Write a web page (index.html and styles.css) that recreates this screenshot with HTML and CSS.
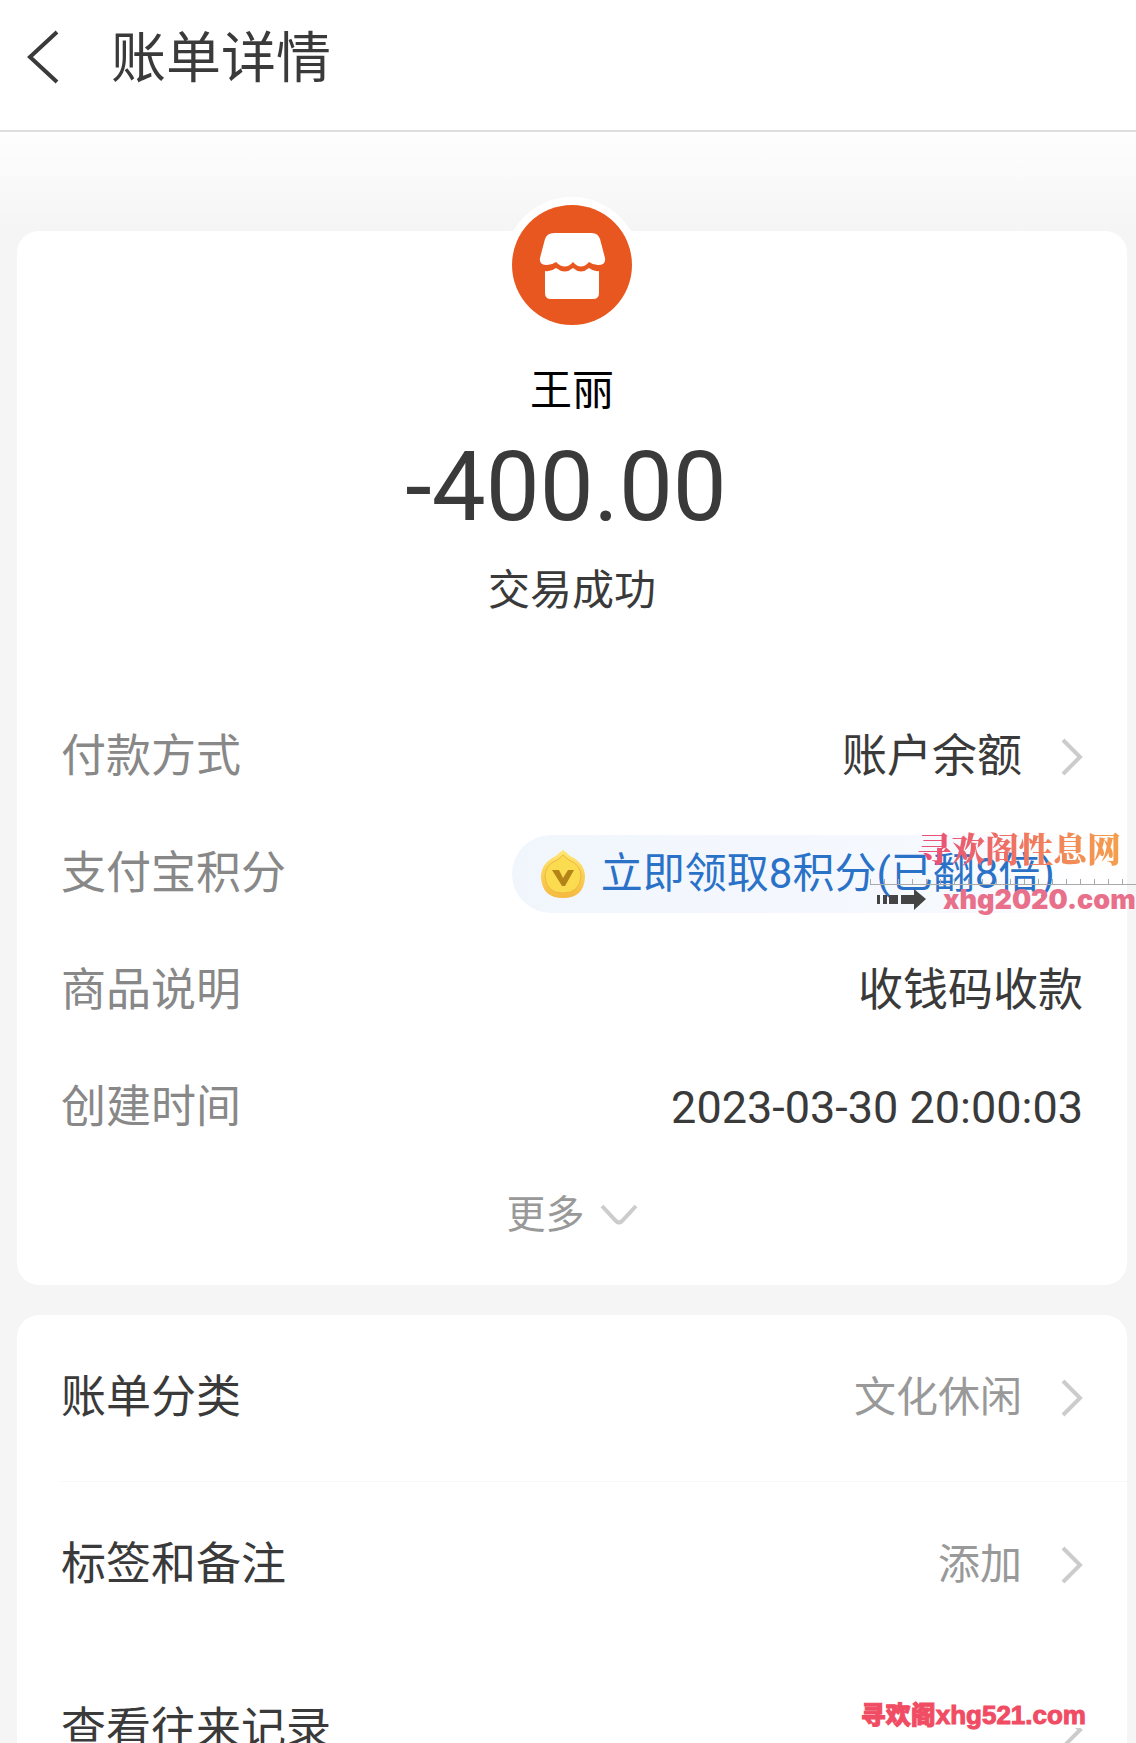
FILE: index.html
```
<!DOCTYPE html>
<html lang="zh-CN">
<head>
  <meta charset="UTF-8">
  <meta name="viewport" content="width=device-width, initial-scale=1">
  <title>账单详情</title>
  <link rel="stylesheet" href="styles.css">
</head>
<body>

  <header class="topbar">
    <button class="back" type="button" aria-label="返回">
      <svg width="34" height="54" viewBox="0 0 34 54"><path d="M31 2 L4 27 L31 52" fill="none" stroke="#3a3a3a" stroke-width="4"/></svg>
    </button>
    <h1>账单详情</h1>
  </header>

  <main>
    <section class="card bill">
      <div class="avatar">
        <svg viewBox="0 0 120 120">
          <circle cx="60" cy="60" r="60" fill="#e8571f"/>
          <path d="M42 28 H80 Q86 28 88 34 L93 53 Q94 60 86 60 Q81 60 77 57 Q69 66 61 57 Q53 66 44 57 Q40 60 35 60 Q27 60 28 53 L33 34 Q35 28 42 28 Z" fill="#fff"/>
          <path d="M33 66 Q39 67 44 63 Q53 70 61 63 Q69 70 77 63 Q82 67 87 66 V88 Q87 94 81 94 H39 Q33 94 33 88 Z" fill="#fff"/>
        </svg>
      </div>
      <p class="payee">王丽</p>
      <p class="amount">-400.00</p>
      <p class="status">交易成功</p>

      <dl class="details">
        <div class="row">
          <dt>付款方式</dt>
          <dd>
            <a href="#">账户余额
              <svg class="chevron" viewBox="0 0 22 38"><path d="M2 2 L19 19 L2 36"/></svg>
            </a>
          </dd>
        </div>
        <div class="row points">
          <dt>支付宝积分</dt>
          <dd>
            <button class="pill" type="button">
              <svg class="coin" viewBox="0 0 46 50">
                <defs>
                  <linearGradient id="gold" x1="0" y1="0" x2="0" y2="1">
                    <stop offset="0" stop-color="#ffe873"/>
                    <stop offset="1" stop-color="#f6b93f"/>
                  </linearGradient>
                </defs>
                <path d="M23 1 Q26 3 30 7 Q45 14 45 28 Q44 49 23 49 Q2 49 1 28 Q1 14 16 7 Q20 3 23 1 Z" fill="url(#gold)"/>
                <path d="M23 6 Q26 9 29 11 Q41 16 41 27 Q40 44 23 44 Q6 44 5 27 Q5 16 17 11 Q20 9 23 6 Z" fill="#fbdc50" stroke="#eeb83a"/>
                <path d="M12 21 H19 L23 29 L28 21 H34 L25 37 H22 Z" fill="#b48419"/>
              </svg>
              立即领取8积分(已翻8倍)
            </button>
          </dd>
          <div class="stamp">
            <span class="stamp-name">寻欢阁性息网</span>
            <span class="stamp-ruler"></span>
            <span class="stamp-site">
              <svg width="50" height="22" viewBox="0 0 50 22"><path d="M0 6 H3 V15 H0 Z M6 6 H10 V15 H6 Z M12 6 H21 V15 H12 Z M24 6 H37 V0 L49 10 L37 21 V15 H24 Z" fill="#444"/></svg>
              xhg2020.com
            </span>
          </div>
        </div>
        <div class="row">
          <dt>商品说明</dt>
          <dd>收钱码收款</dd>
        </div>
        <div class="row">
          <dt>创建时间</dt>
          <dd>2023-03-30 20:00:03</dd>
        </div>
      </dl>

      <button class="more" type="button">更多
        <svg width="38" height="22" viewBox="0 0 38 22"><path d="M2 2 L16 17 Q19 20 22 17 L36 2"/></svg>
      </button>
    </section>

    <section class="card links">
      <a class="link" href="#">
        <span>账单分类</span>
        <span class="value">文化休闲</span>
        <svg class="chevron" viewBox="0 0 22 38"><path d="M2 2 L19 19 L2 36"/></svg>
      </a>
      <a class="link" href="#">
        <span>标签和备注</span>
        <span class="value">添加</span>
        <svg class="chevron" viewBox="0 0 22 38"><path d="M2 2 L19 19 L2 36"/></svg>
      </a>
      <a class="link" href="#">
        <span>查看往来记录</span>
        <span class="value"></span>
        <svg class="chevron" viewBox="0 0 22 38"><path d="M2 2 L19 19 L2 36"/></svg>
      </a>
    </section>
  </main>

  <div class="footer-mark"><b>寻欢阁</b>xhg521.com</div>

</body>
</html>
```
FILE: styles.css
```
* {
  box-sizing: border-box;
}

body {
  position: relative;
  height: 100vh;
  margin: 0;
  overflow: hidden;
  background: #f5f5f5;
  color: #3a3a3a;
  font-family: Roboto, "Noto Sans CJK SC", sans-serif;
  font-size: 45px;
  line-height: 60px;
}

h1, p, dl, dd {
  margin: 0;
}

a {
  color: inherit;
  text-decoration: none;
}

button {
  padding: 0;
  border: none;
  background: none;
  color: inherit;
  font: inherit;
  cursor: pointer;
}

svg {
  display: block;
  flex: none;
}

.topbar {
  display: flex;
  align-items: center;
  gap: 51px;
  height: 132px;
  padding: 0 26px 16px;
  background: #fff;
  border-bottom: 2px solid #dedede;
}

.topbar h1 {
  padding-top: 2px;
  font-size: 55px;
  font-weight: 400;
}

main {
  display: flex;
  flex-direction: column;
  gap: 30px;
  padding: 99px 9px 0 17px;
  background: linear-gradient(#fefefe, #f5f5f5 98px);
}

.card {
  background: #fff;
  border-radius: 22px;
}

.bill {
  display: flex;
  flex-direction: column;
  align-items: center;
  padding-bottom: 40px;
}

.avatar {
  width: 136px;
  margin-top: -34px;
  padding: 8px;
  border-radius: 50%;
  background: #fff;
}

.payee {
  margin-top: 28px;
  color: #000;
  font-size: 42px;
}

.amount {
  margin-top: 6px;
  padding-right: 12px;
  font-size: 96px;
  line-height: 120px;
}

.status {
  margin-top: 14px;
  font-size: 42px;
}

.details {
  width: 100%;
  margin-top: 77px;
  padding: 0 44px;
}

.row {
  position: relative;
  display: flex;
  align-items: center;
  justify-content: space-between;
  height: 117px;
}

.row dt {
  color: #888;
}

.row a {
  display: flex;
  align-items: center;
  gap: 39px;
}

.chevron {
  width: 22px;
  height: 38px;
}

.chevron path,
.more path {
  fill: none;
  stroke: #ccc;
  stroke-width: 4;
}

.pill {
  display: flex;
  align-items: center;
  gap: 15px;
  height: 78px;
  padding: 0 28px;
  border-radius: 39px;
  background: linear-gradient(90deg, #f1f6fd, #f6f9fe 80%, #fff);
  color: #2a72c8;
  font-size: 42px;
}

.coin {
  width: 46px;
  height: 50px;
}

.more {
  display: flex;
  align-items: center;
  gap: 15px;
  margin-top: 19px;
  color: #999;
  font-size: 39px;
}

.link {
  display: flex;
  align-items: center;
  gap: 39px;
  height: 166px;
  margin-left: 44px;
  padding-right: 44px;
}

.link + .link {
  border-top: 1px solid #f7f7f7;
}

.link:last-child {
  border-top: none;
}

.value {
  flex: 1;
  color: #999;
  font-size: 42px;
  text-align: right;
}

/* site stamp over the points row */
.stamp {
  position: absolute;
  top: 8px;
  right: -53px;
  width: 266px;
}

.stamp span {
  display: block;
}

.stamp .stamp-name {
  width: max-content;
  margin-left: 47px;
  background: linear-gradient(90deg, #e94b78, #f5a04c);
  background-clip: text;
  color: transparent;
  font-family: "Noto Serif CJK SC", "Noto Sans CJK SC", serif;
  font-size: 34px;
  font-weight: 900;
  line-height: 50px;
}

.stamp .stamp-ruler {
  height: 6px;
  margin-top: 6px;
  border-bottom: 1px solid #aaa;
  background: repeating-linear-gradient(90deg, #aaa 0 1px, transparent 1px 14px);
}

.stamp .stamp-site {
  display: flex;
  align-items: center;
  gap: 16px;
  padding-left: 7px;
  color: #e8708a;
  font-family: Inter, sans-serif;
  font-size: 27px;
  font-weight: 900;
  line-height: 30px;
}

.footer-mark {
  position: absolute;
  right: 50px;
  bottom: 15px;
  background: #fff;
  color: #f04c64;
  font-family: "Liberation Sans", "Noto Sans CJK SC", sans-serif;
  font-size: 26px;
  font-weight: 900;
  line-height: 26px;
  -webkit-text-stroke: 1px #f04c64;
}

.footer-mark b {
  font-size: 25px;
  font-weight: 900;
}
```
